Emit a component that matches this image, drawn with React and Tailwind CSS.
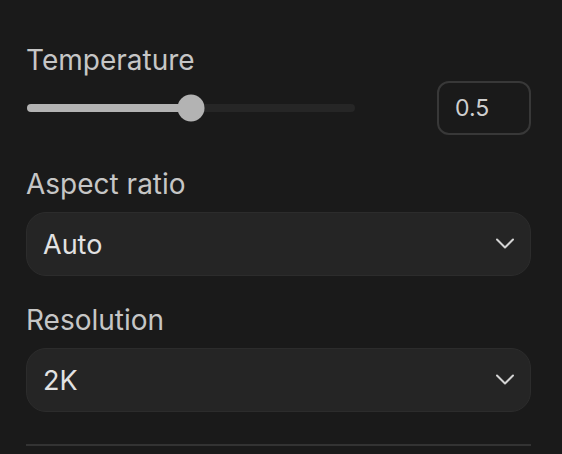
const Chevron = () => (
  <svg width="20" height="12" viewBox="0 0 20 12" fill="none" className="shrink-0">
    <polyline points="2,1.5 10,9.5 18,1.5" stroke="#d4d4d4" strokeWidth="2" strokeLinecap="round" strokeLinejoin="round" />
  </svg>
);

const Select = ({ value }) => (
  <div className="flex h-[64px] items-center justify-between rounded-[20px] border border-[#2c2c2c] bg-[#252525] pl-[16px] pr-[15px]">
    <span className="text-[27px] leading-none text-[#e2e2e2]">{value}</span>
    <Chevron />
  </div>
);

const Label = ({ children }) => (
  <div className="text-[28px] leading-[34px] text-[#c6c6c6]">{children}</div>
);

export default function App() {
  return (
    <div
      className="h-[454px] w-[562px] overflow-hidden bg-[#1a1a1a] pl-[26px] pr-[31px] pt-[43px]"
      style={{ fontFamily: 'Inter, "Noto Sans", sans-serif' }}
    >
      <Label>Temperature</Label>
      <div className="mt-[4px] flex items-center justify-between">
        <div className="relative ml-[1px] h-[8px] w-[328px] rounded-full bg-[#262626]">
          <div className="h-full w-1/2 rounded-full bg-[#b3b3b3]" />
          <div className="absolute left-1/2 top-1/2 h-[27px] w-[27px] -translate-x-1/2 -translate-y-1/2 rounded-full bg-[#b3b3b3]" />
        </div>
        <div className="flex h-[54px] w-[94px] items-center rounded-[12px] border-2 border-[#383838] px-[16px] text-[23px] text-[#cfcfcf]">
          0.5
        </div>
      </div>

      <div className="mt-[32px]">
        <Label>Aspect ratio</Label>
        <div className="mt-[11px]">
          <Select value="Auto" />
        </div>
      </div>

      <div className="mt-[27px]">
        <Label>Resolution</Label>
        <div className="mt-[11px]">
          <Select value="2K" />
        </div>
      </div>

      <div className="mt-[32px] h-[2px] bg-[#333333]" />
    </div>
  );
}
